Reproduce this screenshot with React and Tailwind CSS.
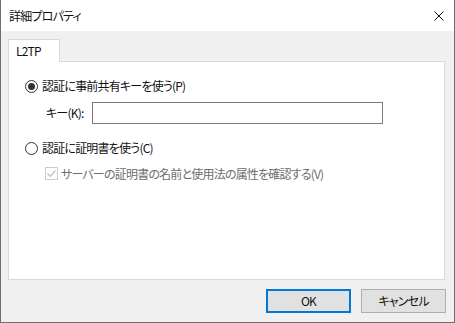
import React from "react";

const font = "font-['Noto_Sans_CJK_JP','Noto_Sans',sans-serif] [font-feature-settings:'palt'] text-[12px] leading-none tracking-[-0.8px]";

const Radio = ({ checked }) => (
  <span className="w-[13px] h-[13px] rounded-full border border-[#333333] bg-white flex items-center justify-center shrink-0">
    {checked && <span className="w-[7px] h-[7px] rounded-full bg-[#333333]" />}
  </span>
);

const DisabledCheck = () => (
  <span className="w-[13px] h-[13px] border border-[#cccccc] bg-white flex items-center justify-center shrink-0">
    <svg width="11" height="11" viewBox="0 0 11 11">
      <path d="M1.5 5.5 L4.3 8.3 L9.5 2.5" fill="none" stroke="#bfbfbf" strokeWidth="1.2" />
    </svg>
  </span>
);

export default function App() {
  return (
    <div className={`w-[455px] h-[323px] flex flex-col border-x border-b border-[#707070] text-[#111] ${font}`}>
      {/* title bar */}
      <div className="h-[31px] bg-white flex items-center justify-between pl-[8px] pr-[10px] shrink-0">
        <span>詳細プロパティ</span>
        <svg width="10" height="10" viewBox="0 0 10 10">
          <path d="M0.5 0.5 L9.5 9.5 M9.5 0.5 L0.5 9.5" stroke="#111" strokeWidth="1" fill="none" />
        </svg>
      </div>

      {/* body */}
      <div className="flex-1 bg-[#f0f0f0] pl-[7px] pt-[8px] flex flex-col">
        <div className="relative z-10 -mb-px w-[52px] h-[23px] bg-white border border-b-0 border-[#d9d9d9] flex items-center pl-[7px]">
          L2TP
        </div>
        <div className="w-[437px] h-[219px] border border-[#d9d9d9] bg-white flex flex-col pl-[16px]">
          <div className="mt-[17px] h-[14px] flex items-center gap-[4px]">
            <Radio checked />
            <span>認証に事前共有キーを使う(P)</span>
          </div>
          <div className="mt-[9px] h-[22px] flex items-center ml-[21px]">
            <span className="w-[46px]">キー(K):</span>
            <div className="w-[291px] h-[22px] border border-[#7a7a7a] bg-white" />
          </div>
          <div className="mt-[17px] h-[14px] flex items-center gap-[4px]">
            <Radio />
            <span>認証に証明書を使う(C)</span>
          </div>
          <div className="mt-[12px] h-[13px] flex items-center gap-[3px] ml-[20px] text-[#6d6d6d]">
            <DisabledCheck />
            <span>サーバーの証明書の名前と使用法の属性を確認する(V)</span>
          </div>
        </div>

        <div className="mt-[9px] flex justify-end gap-[10px] pr-[8px]">
          <button className="w-[85px] h-[24px] bg-[#e1e1e1] border-2 border-[#0078d7] flex items-center justify-center">
            OK
          </button>
          <button className="w-[85px] h-[24px] bg-[#e1e1e1] border border-[#adadad] flex items-center justify-center">
            キャンセル
          </button>
        </div>
      </div>
    </div>
  );
}
